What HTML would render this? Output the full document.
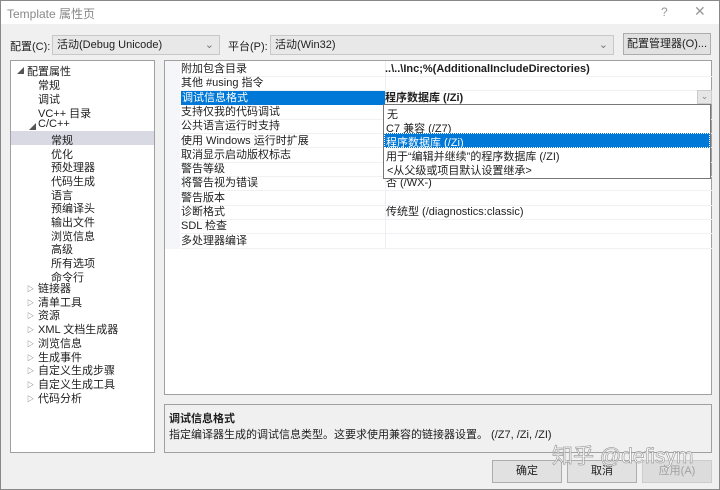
<!DOCTYPE html>
<html><head><meta charset="utf-8"><style>
*{margin:0;padding:0;box-sizing:border-box}
body{width:720px;height:490px;background:#f0f0f0;font-family:"Liberation Sans","Noto Sans CJK SC",sans-serif;font-size:11px;color:#1e1e1e;position:relative;overflow:hidden}
.a{position:absolute;white-space:nowrap}
.win{position:absolute;left:0;top:0;width:720px;height:490px;border:1px solid #888}
.title{position:absolute;left:1px;top:1px;width:718px;height:23px;background:#fff}
.combo{position:absolute;height:20px;background:#e8e8e8;border:1px solid #c8c8c8;padding:2px 4px;line-height:14px}
.btn{position:absolute;background:#e1e1e1;border:1px solid #adadad;text-align:center}
.panel{position:absolute;background:#fff;border:1px solid #a0a0a0}
.row{position:absolute;left:0;height:14px;line-height:14px}
.gl{position:absolute;left:16px;width:531px;height:1px;background:#f0f1f4}
.tri{font-size:7px;color:#555;display:inline-block;width:11px;vertical-align:1px}
</style></head><body>
<div class="win"></div>
<div class="title"></div>
<div class="a" style="left:7px;top:5px;font-size:12px;color:#888">Template 属性页</div>
<div class="a" style="left:661px;top:5px;color:#999;font-size:12px">?</div>
<div class="a" style="left:694px;top:3px;color:#999;font-size:14px">✕</div>

<div class="a" style="left:10px;top:38px">配置(C):</div>
<div class="combo" style="left:52px;top:35px;width:168px">活动(Debug Unicode)<span class="a" style="right:5px;top:2px;color:#777">⌄</span></div>
<div class="a" style="left:228px;top:38px">平台(P):</div>
<div class="combo" style="left:270px;top:35px;width:344px">活动(Win32)<span class="a" style="right:5px;top:2px;color:#777">⌄</span></div>
<div class="btn" style="left:623px;top:33px;width:88px;height:22px;line-height:20px">配置管理器(O)...</div>

<div class="panel" style="left:10px;top:60px;width:145px;height:393px">
<div class="a" style="left:0;top:70px;width:143px;height:14px;background:#d9d9e3"></div>
<div class="a" style="left:6px;top:5px;font-size:7px;color:#555">◢</div><div class="a" style="left:16px;top:2px">配置属性</div>
<div class="a" style="left:27px;top:16px">常规</div>
<div class="a" style="left:27px;top:30px">调试</div>
<div class="a" style="left:27px;top:44px">VC++ 目录</div>
<div class="a" style="left:18px;top:61px;font-size:7px;color:#555">◢</div><div class="a" style="left:27px;top:57px">C/C++</div>
<div class="a" style="left:40px;top:71px">常规</div>
<div class="a" style="left:40px;top:85px">优化</div>
<div class="a" style="left:40px;top:98px">预处理器</div>
<div class="a" style="left:40px;top:112px">代码生成</div>
<div class="a" style="left:40px;top:126px">语言</div>
<div class="a" style="left:40px;top:139px">预编译头</div>
<div class="a" style="left:40px;top:153px">输出文件</div>
<div class="a" style="left:40px;top:167px">浏览信息</div>
<div class="a" style="left:40px;top:180px">高级</div>
<div class="a" style="left:40px;top:194px">所有选项</div>
<div class="a" style="left:40px;top:208px">命令行</div>
<div style="position:absolute;left:16px;top:222px;line-height:13.7px">
<div><span class="tri">▷</span>链接器</div><div><span class="tri">▷</span>清单工具</div><div><span class="tri">▷</span>资源</div><div><span class="tri">▷</span>XML 文档生成器</div><div><span class="tri">▷</span>浏览信息</div><div><span class="tri">▷</span>生成事件</div><div><span class="tri">▷</span>自定义生成步骤</div><div><span class="tri">▷</span>自定义生成工具</div><div><span class="tri">▷</span>代码分析</div></div>
</div>

<div class="panel" style="left:164px;top:60px;width:548px;height:335px">
<div class="a" style="left:0;top:0;width:15px;height:188px;background:#f4f6f9"></div>
<div class="a" style="left:220px;top:0;width:1px;height:188px;background:#eceef2"></div>
<div class="gl" style="top:15px"></div><div class="gl" style="top:29px"></div><div class="gl" style="top:58px"></div><div class="gl" style="top:72px"></div><div class="gl" style="top:86px"></div><div class="gl" style="top:101px"></div><div class="gl" style="top:115px"></div><div class="gl" style="top:129px"></div><div class="gl" style="top:144px"></div><div class="gl" style="top:158px"></div><div class="gl" style="top:172px"></div><div class="gl" style="top:187px"></div>
<div style="position:absolute;left:16px;top:1px;width:531px">
<div class="row" style="top:0;left:0">附加包含目录</div>
<div class="row" style="top:0;left:204px;font-weight:bold">..\..\Inc;%(AdditionalIncludeDirectories)</div>
<div class="row" style="top:14.3px">其他 #using 指令</div>
<div class="row" style="top:28.6px;width:204px;background:#0078d7;color:#fff;padding-left:1px">调试信息格式</div>
<div class="row" style="top:28.6px;left:204px;font-weight:bold">程序数据库 (/Zi)</div>
<div class="a" style="left:516px;top:28px;width:15px;height:14px;background:#e6e6e6;border:1px solid #ccc;color:#888;font-size:9px;text-align:center;line-height:11px">⌄</div>
<div class="row" style="top:42.9px">支持仅我的代码调试</div>
<div class="row" style="top:57.2px">公共语言运行时支持</div>
<div class="row" style="top:71.5px">使用 Windows 运行时扩展</div>
<div class="row" style="top:85.8px">取消显示启动版权标志</div>
<div class="row" style="top:100.1px">警告等级</div>
<div class="row" style="top:114.4px">将警告视为错误</div>
<div class="row" style="top:114.4px;left:205px">否 (/WX-)</div>
<div class="row" style="top:128.7px">警告版本</div>
<div class="row" style="top:143px">诊断格式</div>
<div class="row" style="top:143px;left:205px">传统型 (/diagnostics:classic)</div>
<div class="row" style="top:157.3px">SDL 检查</div>
<div class="row" style="top:171.6px">多处理器编译</div>
</div>
</div>

<div class="a" style="left:383px;top:104px;width:328px;height:75px;background:#fff;border:1px solid #777">
<div class="a" style="left:3px;top:1px">无</div>
<div class="a" style="left:2px;top:15px">C7 兼容 (/Z7)</div>
<div class="a" style="left:0;top:28px;width:326px;height:15px;background:#0078d7;border:1px dotted #fff"></div>
<div class="a" style="left:2px;top:29px;color:#fff">程序数据库 (/Zi)</div>
<div class="a" style="left:2px;top:43px">用于“编辑并继续”的程序数据库 (/ZI)</div>
<div class="a" style="left:3px;top:57px">&lt;从父级或项目默认设置继承&gt;</div>
</div>

<div class="a" style="left:164px;top:404px;width:548px;height:49px;background:#f0f0f0;border:1px solid #a0a0a0">
<div class="a" style="left:4px;top:5px;font-weight:bold">调试信息格式</div>
<div class="a" style="left:4px;top:21px">指定编译器生成的调试信息类型。这要求使用兼容的链接器设置。 (/Z7, /Zi, /ZI)</div>
</div>

<div class="btn" style="left:492px;top:460px;width:70px;height:23px;line-height:21px">确定</div>
<div class="btn" style="left:567px;top:460px;width:70px;height:23px;line-height:21px">取消</div>
<div class="btn" style="left:642px;top:460px;width:70px;height:23px;line-height:21px;color:#a0a0a0;background:#dcdcdc;border-color:#ccc">应用(A)</div>
<div class="a" style="left:552px;top:440px;font-size:21px;color:#fff;-webkit-text-stroke:0.7px #999;opacity:.9">知乎 @defisym</div>
</body></html>
